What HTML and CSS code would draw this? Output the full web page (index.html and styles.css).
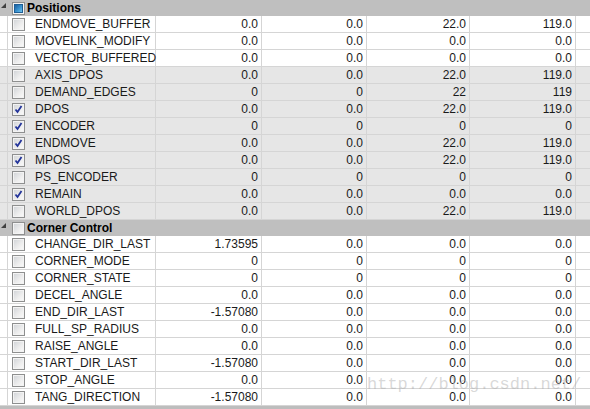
FILE: index.html
```html
<!DOCTYPE html>
<html>
<head>
<meta charset="utf-8">
<link rel="stylesheet" href="styles.css">
</head>
<body>
<div class="grid">
  <div class="group">
    <span class="exp"><svg width="7" height="7" viewBox="0 0 7 7"><polygon points="6,1 6,6 1,6" fill="#404040"/></svg></span>
    <span class="cb cb-mixed"><span class="fill"></span></span>
    <span class="gtitle">Positions</span>
  </div>
  <div class="row"><span class="c0"></span><span class="c1"><span class="cb"></span><span class="name">ENDMOVE_BUFFER</span></span><span class="v">0.0</span><span class="v">0.0</span><span class="v">22.0</span><span class="v">119.0</span><span class="rest"></span></div>
  <div class="row"><span class="c0"></span><span class="c1"><span class="cb"></span><span class="name">MOVELINK_MODIFY</span></span><span class="v">0.0</span><span class="v">0.0</span><span class="v">0.0</span><span class="v">0.0</span><span class="rest"></span></div>
  <div class="row"><span class="c0"></span><span class="c1"><span class="cb"></span><span class="name">VECTOR_BUFFERED</span></span><span class="v">0.0</span><span class="v">0.0</span><span class="v">0.0</span><span class="v">0.0</span><span class="rest"></span></div>
  <div class="row shade"><span class="c0"></span><span class="c1"><span class="cb"></span><span class="name">AXIS_DPOS</span></span><span class="v">0.0</span><span class="v">0.0</span><span class="v">22.0</span><span class="v">119.0</span><span class="rest"></span></div>
  <div class="row shade"><span class="c0"></span><span class="c1"><span class="cb"></span><span class="name">DEMAND_EDGES</span></span><span class="v">0</span><span class="v">0</span><span class="v">22</span><span class="v">119</span><span class="rest"></span></div>
  <div class="row shade"><span class="c0"></span><span class="c1"><span class="cb on"><svg class="tick" width="9" height="9" viewBox="0 0 9 9"><path d="M1.5 4.5 L3.5 7 L7.5 1" fill="none" stroke="#23349a" stroke-width="1.8"/></svg></span><span class="name">DPOS</span></span><span class="v">0.0</span><span class="v">0.0</span><span class="v">22.0</span><span class="v">119.0</span><span class="rest"></span></div>
  <div class="row shade"><span class="c0"></span><span class="c1"><span class="cb on"><svg class="tick" width="9" height="9" viewBox="0 0 9 9"><path d="M1.5 4.5 L3.5 7 L7.5 1" fill="none" stroke="#23349a" stroke-width="1.8"/></svg></span><span class="name">ENCODER</span></span><span class="v">0</span><span class="v">0</span><span class="v">0</span><span class="v">0</span><span class="rest"></span></div>
  <div class="row shade"><span class="c0"></span><span class="c1"><span class="cb on"><svg class="tick" width="9" height="9" viewBox="0 0 9 9"><path d="M1.5 4.5 L3.5 7 L7.5 1" fill="none" stroke="#23349a" stroke-width="1.8"/></svg></span><span class="name">ENDMOVE</span></span><span class="v">0.0</span><span class="v">0.0</span><span class="v">22.0</span><span class="v">119.0</span><span class="rest"></span></div>
  <div class="row shade"><span class="c0"></span><span class="c1"><span class="cb on"><svg class="tick" width="9" height="9" viewBox="0 0 9 9"><path d="M1.5 4.5 L3.5 7 L7.5 1" fill="none" stroke="#23349a" stroke-width="1.8"/></svg></span><span class="name">MPOS</span></span><span class="v">0.0</span><span class="v">0.0</span><span class="v">22.0</span><span class="v">119.0</span><span class="rest"></span></div>
  <div class="row shade"><span class="c0"></span><span class="c1"><span class="cb"></span><span class="name">PS_ENCODER</span></span><span class="v">0</span><span class="v">0</span><span class="v">0</span><span class="v">0</span><span class="rest"></span></div>
  <div class="row shade"><span class="c0"></span><span class="c1"><span class="cb on"><svg class="tick" width="9" height="9" viewBox="0 0 9 9"><path d="M1.5 4.5 L3.5 7 L7.5 1" fill="none" stroke="#23349a" stroke-width="1.8"/></svg></span><span class="name">REMAIN</span></span><span class="v">0.0</span><span class="v">0.0</span><span class="v">0.0</span><span class="v">0.0</span><span class="rest"></span></div>
  <div class="row shade"><span class="c0"></span><span class="c1"><span class="cb"></span><span class="name">WORLD_DPOS</span></span><span class="v">0.0</span><span class="v">0.0</span><span class="v">22.0</span><span class="v">119.0</span><span class="rest"></span></div>

  <div class="group">
    <span class="exp"><svg width="7" height="7" viewBox="0 0 7 7"><polygon points="6,1 6,6 1,6" fill="#404040"/></svg></span>
    <span class="cb"></span>
    <span class="gtitle">Corner Control</span>
  </div>
  <div class="row"><span class="c0"></span><span class="c1"><span class="cb"></span><span class="name">CHANGE_DIR_LAST</span></span><span class="v">1.73595</span><span class="v">0.0</span><span class="v">0.0</span><span class="v">0.0</span><span class="rest"></span></div>
  <div class="row"><span class="c0"></span><span class="c1"><span class="cb"></span><span class="name">CORNER_MODE</span></span><span class="v">0</span><span class="v">0</span><span class="v">0</span><span class="v">0</span><span class="rest"></span></div>
  <div class="row"><span class="c0"></span><span class="c1"><span class="cb"></span><span class="name">CORNER_STATE</span></span><span class="v">0</span><span class="v">0</span><span class="v">0</span><span class="v">0</span><span class="rest"></span></div>
  <div class="row"><span class="c0"></span><span class="c1"><span class="cb"></span><span class="name">DECEL_ANGLE</span></span><span class="v">0.0</span><span class="v">0.0</span><span class="v">0.0</span><span class="v">0.0</span><span class="rest"></span></div>
  <div class="row"><span class="c0"></span><span class="c1"><span class="cb"></span><span class="name">END_DIR_LAST</span></span><span class="v">-1.57080</span><span class="v">0.0</span><span class="v">0.0</span><span class="v">0.0</span><span class="rest"></span></div>
  <div class="row"><span class="c0"></span><span class="c1"><span class="cb"></span><span class="name">FULL_SP_RADIUS</span></span><span class="v">0.0</span><span class="v">0.0</span><span class="v">0.0</span><span class="v">0.0</span><span class="rest"></span></div>
  <div class="row"><span class="c0"></span><span class="c1"><span class="cb"></span><span class="name">RAISE_ANGLE</span></span><span class="v">0.0</span><span class="v">0.0</span><span class="v">0.0</span><span class="v">0.0</span><span class="rest"></span></div>
  <div class="row"><span class="c0"></span><span class="c1"><span class="cb"></span><span class="name">START_DIR_LAST</span></span><span class="v">-1.57080</span><span class="v">0.0</span><span class="v">0.0</span><span class="v">0.0</span><span class="rest"></span></div>
  <div class="row"><span class="c0"></span><span class="c1"><span class="cb"></span><span class="name">STOP_ANGLE</span></span><span class="v">0.0</span><span class="v">0.0</span><span class="v">0.0</span><span class="v">0.0</span><span class="rest"></span></div>
  <div class="row"><span class="c0"></span><span class="c1"><span class="cb"></span><span class="name">TANG_DIRECTION</span></span><span class="v">-1.57080</span><span class="v">0.0</span><span class="v">0.0</span><span class="v">0.0</span><span class="rest"></span></div>
  <div class="hbar"></div>
</div>
<div class="watermark">http://blog.csdn.net/</div>
</body>
</html>
```

FILE: styles.css
```css
html, body {
  margin: 0;
  padding: 0;
  background: #fff;
}
body {
  width: 590px;
  height: 409px;
  overflow: hidden;
  position: relative;
  font-family: "Liberation Sans", Arial, sans-serif;
  font-size: 12px;
  color: #1a1a1a;
}
.grid {
  display: flex;
  flex-direction: column;
}
.group {
  height: 16px;
  flex: none;
  background: #bfbfbf;
  display: flex;
  align-items: center;
}
.exp {
  width: 8px;
  height: 16px;
  display: flex;
  align-items: flex-start;
  padding-top: 2px;
  box-sizing: border-box;
}
.group .cb {
  margin-left: 4px;
}
.gtitle {
  font-weight: bold;
  margin-left: 2px;
  color: #000;
}
.row {
  height: 17px;
  flex: none;
  display: grid;
  grid-template-columns: 8px 148px 106px 105px 103px 106px 1fr;
  box-sizing: border-box;
  border-bottom: 1px solid #d5d5d5;
  line-height: 16px;
}
.row.shade {
  background: #e6e6e6;
}
.row > span {
  border-right: 1px solid #d5d5d5;
  box-sizing: border-box;
  height: 16px;
}
.row > span.rest {
  border-right: none;
}
.c1 {
  display: flex;
  align-items: center;
}
.c1 .cb {
  margin-left: 4px;
}
.name {
  margin-left: 10px;
  white-space: nowrap;
}
.v {
  text-align: right;
  padding-right: 3px;
  white-space: nowrap;
}
.cb {
  width: 13px;
  height: 13px;
  box-sizing: border-box;
  border: 1px solid #8e8f8f;
  background: linear-gradient(135deg, #cfd2d6 0%, #eeeeee 60%, #fbfbfb 100%);
  box-shadow: inset 0 0 0 1px #f3f3f3;
  display: flex;
  align-items: center;
  justify-content: center;
  flex: none;
}
.cb-mixed .fill {
  width: 9px;
  height: 9px;
  background: linear-gradient(135deg, #1b5fa0 0%, #3a93cf 55%, #70c4ee 100%);
  border: 1px solid #1e5e95;
  box-sizing: border-box;
}
.tick {
  display: block;
}
.hbar {
  height: 3px;
  flex: none;
  background: #bdbdbd;
}
.watermark {
  position: absolute;
  left: 367px;
  top: 375px;
  font-family: "Liberation Mono", "Courier New", monospace;
  font-size: 17px;
  color: rgba(170, 170, 170, 0.45);
  white-space: nowrap;
  pointer-events: none;
}
```
